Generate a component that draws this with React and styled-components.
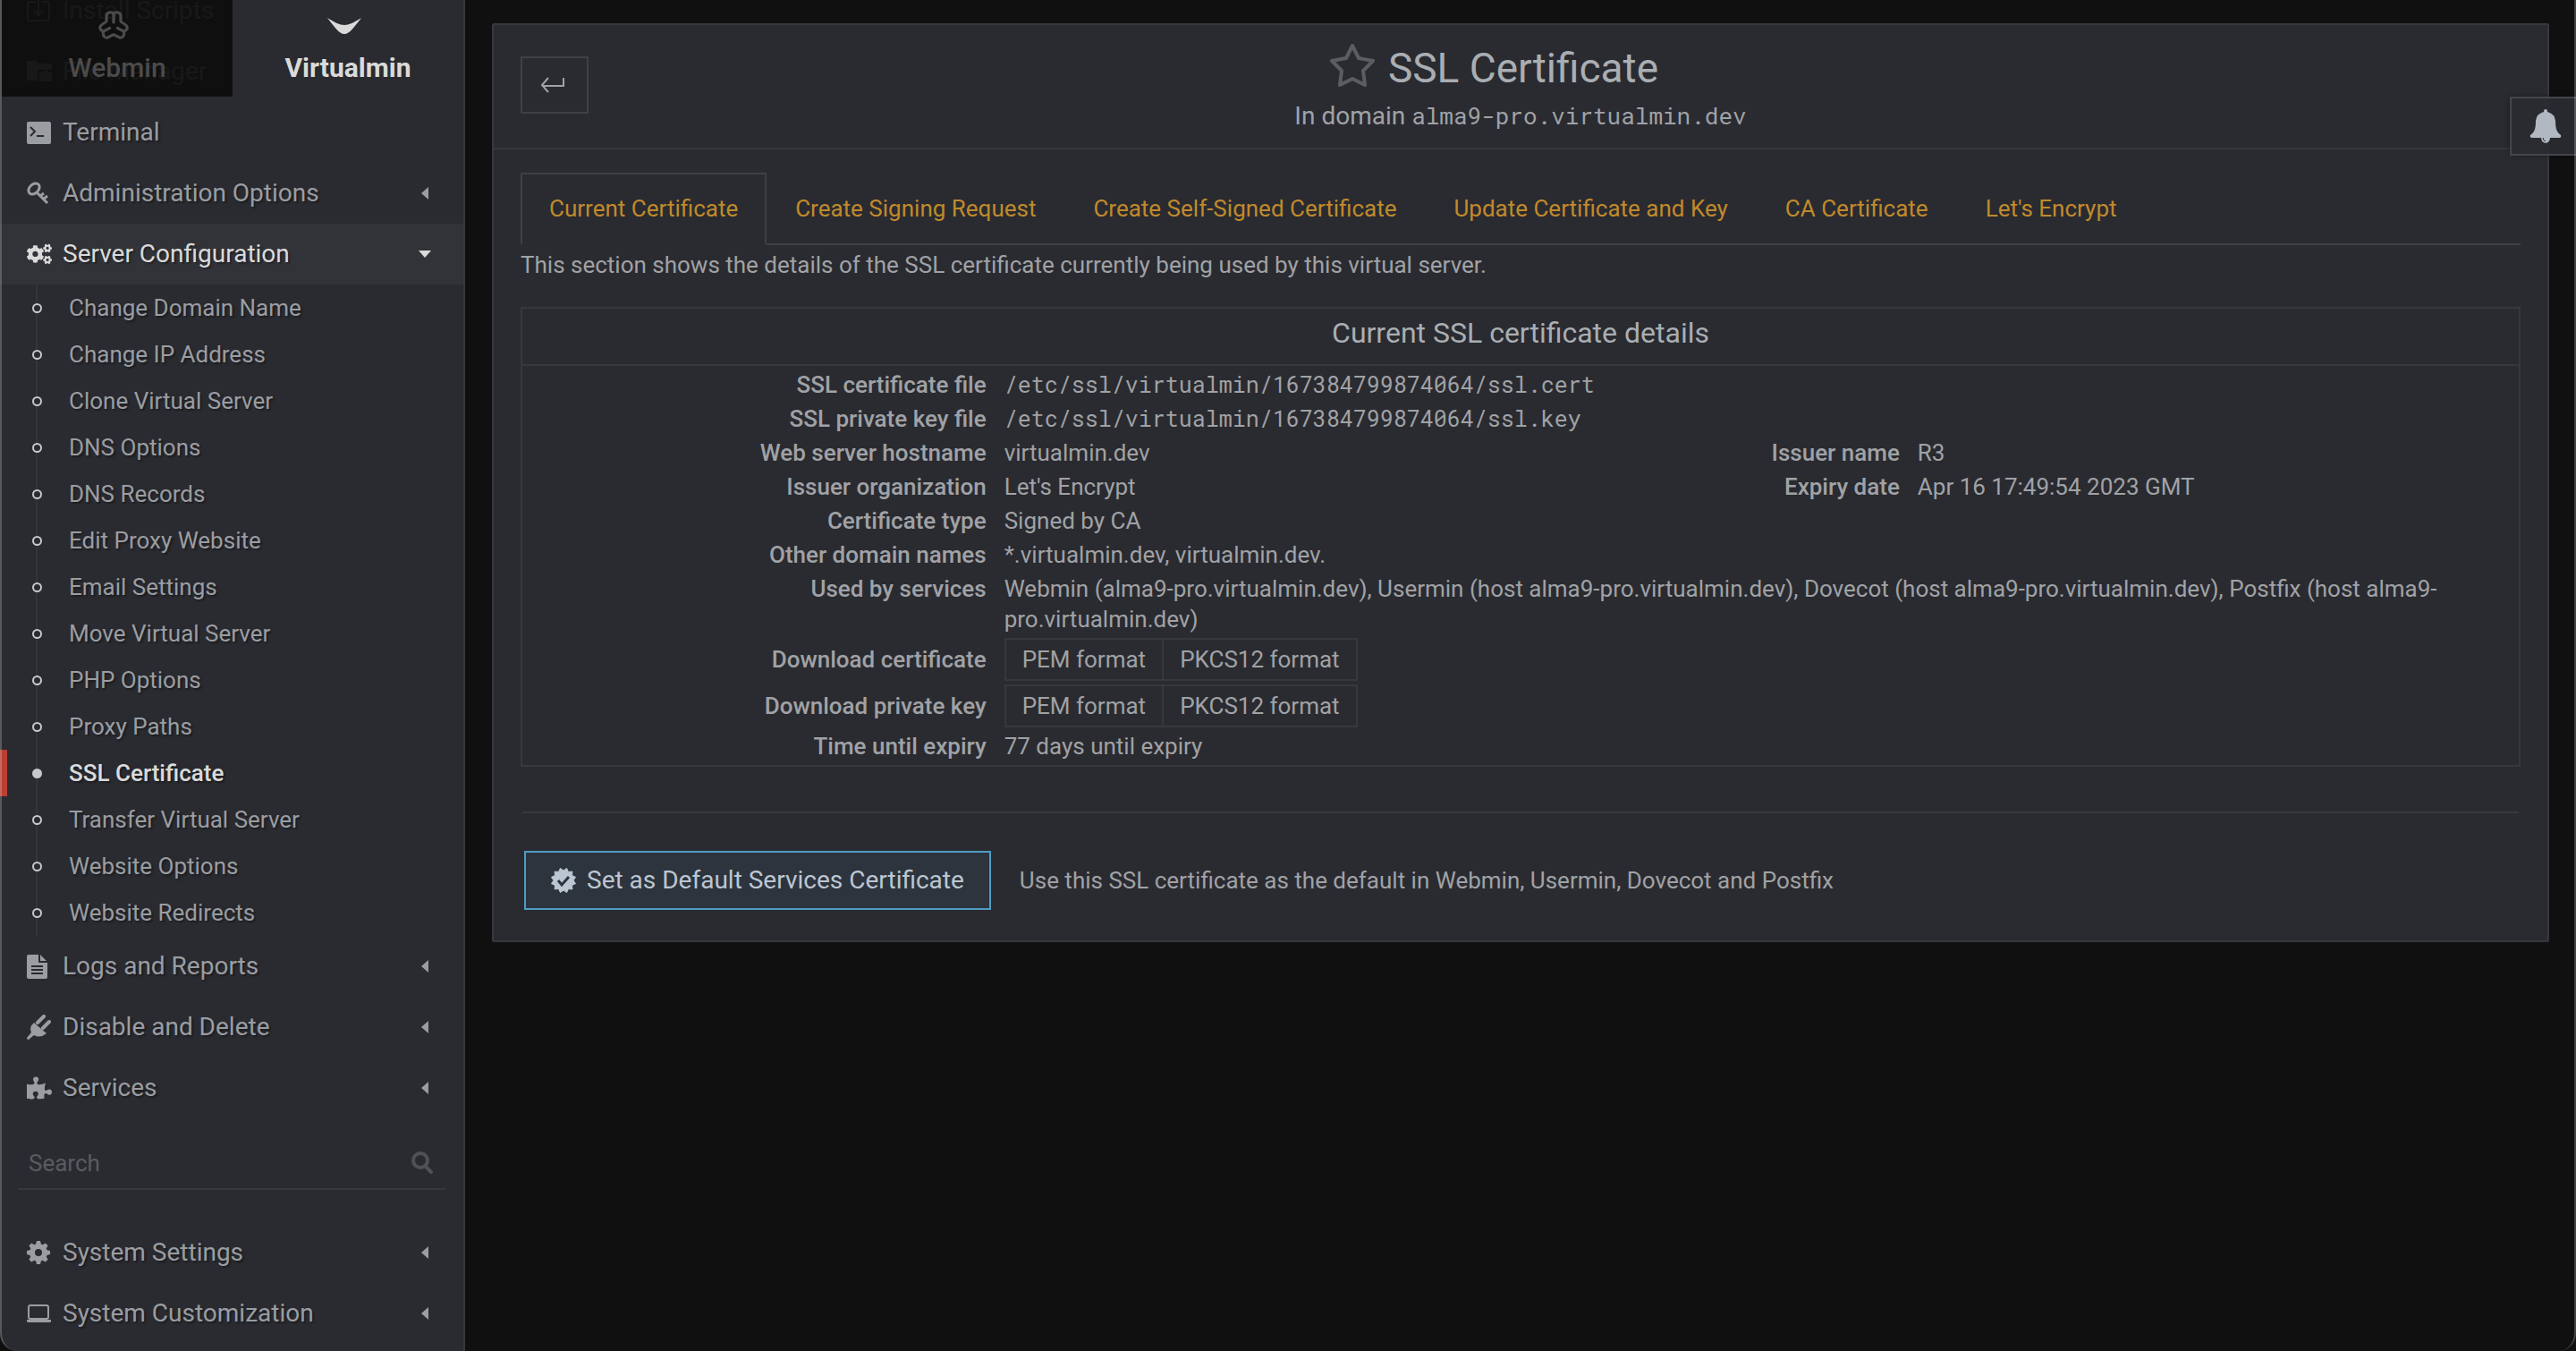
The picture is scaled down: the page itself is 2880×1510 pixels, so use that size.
import React from "react";
import styled, { createGlobalStyle, css } from "styled-components";
import { FaCogs, FaPuzzlePiece } from "react-icons/fa";

const color = {
  page: "#101010",
  panel: "#2a2b30",
  raised: "#323338",
  line: "#37383d",
  lineStrong: "#3f4046",
  text: "#a0a2a6",
  menu: "#9a9da2",
  heading: "#a9aeb3",
  bright: "#dadada",
  link: "#c08a2c",
  danger: "#b93f33",
  info: "#4f9cc4",
};

const mono = '"Roboto Mono", "DejaVu Sans Mono", monospace';

const GlobalStyle = createGlobalStyle`
  *, *::before, *::after { box-sizing: border-box; }
  body {
    margin: 0;
    background: ${color.page};
    color: ${color.text};
    font: 400 26px/34px Roboto, "Liberation Sans", sans-serif;
  }
  button, input { font: inherit; color: inherit; margin: 0; }
  button { cursor: pointer; }
  a { color: inherit; text-decoration: none; }
  h1, h2, p, ul { margin: 0; padding: 0; font-weight: 400; }
  ul { list-style: none; }
`;

const Page = styled.div`
  display: flex;
  min-height: 100vh;
`;

const WindowEdge = styled.div`
  position: fixed;
  inset: 0;
  border: 2px solid rgba(255, 255, 255, 0.22);
  border-top: 0;
  border-bottom: 0;
  border-radius: 0 0 20px 20px;
  pointer-events: none;
`;

/* ---------- sidebar ---------- */

const Sidebar = styled.aside`
  position: relative;
  flex: none;
  width: 520px;
  max-height: 100vh;
  overflow: hidden;
  background: ${color.panel};
  border-right: 2px solid ${color.line};
  border-bottom-left-radius: 20px;
`;

const ProductTabs = styled.div`
  position: absolute;
  top: 0;
  left: 2px;
  right: 0;
  display: grid;
  grid-template-columns: 1fr 1fr;
`;

const ProductTab = styled.button`
  display: flex;
  flex-direction: column;
  align-items: center;
  justify-content: space-between;
  height: 108px;
  padding: 12px 0 15px;
  border: 0;
  font-size: 30px;
  font-weight: ${(p) => (p.$active ? 700 : 500)};
  color: ${(p) => (p.$active ? color.bright : "#4b4b4b")};
  background: ${(p) => (p.$active ? color.panel : "rgba(13, 13, 13, 0.92)")};
  svg { margin-right: 8px; }
`;

const Menu = styled.ul`
  text-shadow: 2px 2px 2px rgba(0, 0, 0, 0.35);
`;

const ScrolledMenu = styled(Menu)`
  margin-top: -22px;
`;

const menuRow = css`
  display: flex;
  align-items: center;
  gap: 10px;
  width: 100%;
  height: 68px;
  padding: 0 36px 0 30px;
  border: 0;
  font-size: 28px;
  text-align: left;
  text-shadow: inherit;
  color: ${(p) => (p.$open ? color.bright : color.menu)};
  background: ${(p) => (p.$open ? color.raised : "transparent")};
`;

const MenuLink = styled.a`
  ${menuRow}
`;

const MenuButton = styled.button`
  ${menuRow}
`;

const MenuIcon = styled.span`
  display: flex;
  flex: none;
  width: 30px;
  svg { display: block; flex: none; }
`;

const MenuLabel = styled.span`
  flex: 1;
`;

const Caret = styled.span`
  width: 0;
  height: 0;
  border: solid transparent;
  ${(p) =>
    p.$open
      ? css`
          border-width: 8px 7px 0;
          border-top-color: currentColor;
        `
      : css`
          border-width: 7px 8px 7px 0;
          border-right-color: currentColor;
          margin-right: 3px;
        `}
`;

const SubMenu = styled.ul`
  background: linear-gradient(#33353a, #33353a) 40px 0 / 2px 100% no-repeat;
`;

const SubLink = styled.a`
  display: flex;
  align-items: center;
  gap: 30px;
  height: 52px;
  padding-left: ${(p) => (p.$current ? 28 : 36)}px;
  border-left: ${(p) => (p.$current ? `8px solid ${color.danger}` : "0")};
  font-weight: ${(p) => (p.$current ? 500 : 400)};
  color: ${(p) => (p.$current ? color.bright : color.menu)};

  &::before {
    content: "";
    width: 11px;
    height: 11px;
    border: 2px solid #c6c7c9;
    border-radius: 50%;
    background: ${(p) => (p.$current ? "#c6c7c9" : color.panel)};
  }
`;

const SearchBox = styled.label`
  display: flex;
  align-items: center;
  height: 58px;
  margin: 22px 20px 36px;
  padding: 0 14px 0 12px;
  border-bottom: 2px solid ${color.line};
  color: #505154;
`;

const SearchInput = styled.input`
  flex: 1;
  min-width: 0;
  padding: 0;
  border: 0;
  outline: 0;
  background: transparent;
  &::placeholder { color: #5a5b60; opacity: 1; }
`;

/* ---------- main panel ---------- */

const Main = styled.main`
  flex: 1;
  min-width: 0;
  padding: 26px 30px;
`;

const Panel = styled.section`
  background: ${color.panel};
  border: 2px solid ${color.line};
  border-radius: 2px;
`;

const PanelHeader = styled.header`
  display: grid;
  grid-template-columns: 1fr auto 1fr;
  align-items: start;
  padding: 20px 30px 16px;
  border-bottom: 2px solid ${color.line};
`;

const BackButton = styled.button`
  display: flex;
  align-items: center;
  justify-content: center;
  width: 76px;
  height: 64px;
  margin-top: 15px;
  padding: 0 4px 0 0;
  border: 2px solid ${color.lineStrong};
  background: transparent;
`;

const Heading = styled.div`
  display: flex;
  flex-direction: column;
  align-items: center;
  gap: 7px;
`;

const TitleRow = styled.div`
  display: flex;
  align-items: flex-start;
  gap: 14px;
  padding-right: 60px;
`;

const StarButton = styled.button`
  display: flex;
  padding: 0;
  border: 0;
  background: transparent;
  color: #5c5d61;
`;

const Title = styled.h1`
  font-size: 46px;
  line-height: 56px;
  color: ${color.heading};
`;

const Subtitle = styled.p`
  font-size: 28px;
  line-height: 38px;
`;

const Code = styled.code`
  font-family: ${mono};
  font-size: ${(p) => (p.$large ? 26 : 25)}px;
  line-height: 1;
`;

const PanelBody = styled.div`
  padding: 26px 30px 34px;
`;

const Tabs = styled.nav`
  display: flex;
  border-bottom: 2px solid ${color.lineStrong};
`;

const Tab = styled.a`
  margin-bottom: -2px;
  padding: 21px 30px 22px;
  border: 2px solid transparent;
  color: ${color.link};
  ${(p) =>
    p.$active &&
    css`
      border-color: ${color.lineStrong};
      border-bottom-color: ${color.panel};
    `}
`;

const Description = styled.p`
  padding: 5px 0 30px;
`;

const Details = styled.div`
  border: 2px solid ${color.line};
`;

const DetailsTitle = styled.h2`
  padding: 8px 0 16px;
  border-bottom: 2px solid ${color.line};
  font-size: 32px;
  line-height: 38px;
  text-align: center;
  color: ${color.heading};
`;

const Table = styled.table`
  width: 100%;
  margin: 2px 0;
  border-collapse: collapse;
  table-layout: fixed;
`;

const Col = styled.col`
  width: ${(p) => p.$width};
`;

const LabelCell = styled.th`
  padding: 2px 17px 2px 0;
  font-weight: 500;
  text-align: right;
  vertical-align: ${(p) => (p.$middle ? "middle" : "top")};
  white-space: nowrap;
`;

const ValueCell = styled.td`
  padding: 2px 3px;
  vertical-align: top;
`;

const ButtonGroup = styled.div`
  display: flex;
`;

const FormatButton = styled.button`
  height: 48px;
  padding: 0 18px;
  border: 2px solid ${color.line};
  background: transparent;
  & + & { margin-left: -2px; }
`;

const Divider = styled.hr`
  height: 2px;
  margin: 50px 2px 42px;
  border: 0;
  background: ${color.line};
`;

const ActionRow = styled.div`
  display: flex;
  align-items: center;
  gap: 32px;
  padding-left: 4px;
`;

const PrimaryButton = styled.button`
  display: flex;
  align-items: center;
  gap: 12px;
  height: 66px;
  padding: 0 28px;
  border: 2px solid ${color.info};
  background: #2d343e;
  color: #bcc6d2;
  font-size: 28px;
`;

const NotificationButton = styled.button`
  position: fixed;
  top: 108px;
  right: 0;
  display: flex;
  align-items: center;
  width: 74px;
  height: 66px;
  padding: 0 0 0 20px;
  border: 2px solid #45464c;
  border-right: 0;
  background: rgba(42, 43, 48, 0.93);
  box-shadow: 0 0 6px rgba(0, 0, 0, 0.4);
  color: #b2b8c2;
`;

/* ---------- icons ---------- */

const WebminLogo = () => (
  <svg width="34" height="32" viewBox="0 0 94 94" preserveAspectRatio="none" fill="none" stroke="currentColor" strokeWidth="9" strokeLinecap="round" strokeLinejoin="round" aria-hidden="true">
    <path d="M47 10 C40 3 25 3 25 17 L25 34 C25 40 5 44 5 55 C5 64 13 66 15 68 C13 84 20 90 29 88 L47 78 L65 88 C74 90 81 84 79 68 C81 66 89 64 89 55 C89 44 69 40 69 34 L69 17 C69 3 54 3 47 10 Z" />
    <path d="M47 10 V38 M15 68 L35 57 M79 68 L59 57" />
  </svg>
);

const VirtualminLogo = () => (
  <svg width="38" height="34" viewBox="0 0 38 34" fill="currentColor" aria-hidden="true">
    <path d="M0 8 C8 18 13 26 19 26 C25 26 30 18 38 8 C30 13 24 16 19 16 C14 16 8 13 0 8 Z" />
  </svg>
);

const InstallIcon = () => (
  <svg width="28" height="28" viewBox="0 0 28 28" fill="none" stroke="currentColor" strokeWidth="2" aria-hidden="true">
    <path d="M10 4 H3 Q1 4 1 6 V23 Q1 25 3 25 H23 Q25 25 25 23 V6 Q25 4 23 4 H17 M13 2 V18 M8 14 L13 19 L18 14" />
  </svg>
);

const FolderIcon = () => (
  <svg width="28" height="24" viewBox="0 0 28 24" fill="currentColor" aria-hidden="true">
    <path d="M2 0 H10 L13 3 H26 Q28 3 28 5 V10 H12 V22 H2 Q0 22 0 20 V2 Q0 0 2 0 Z M14 13 H17 V11 H24 V13 H28 V23 H14 Z" />
  </svg>
);

const TerminalIcon = () => (
  <svg width="28" height="26" viewBox="0 0 28 26" aria-hidden="true">
    <rect x="0" y="1" width="27" height="25" rx="2" fill="currentColor" />
    <path d="M4 7 L9 12 L4 17 M11 17 H19" fill="none" stroke={color.panel} strokeWidth="2" />
  </svg>
);

const KeyIcon = () => (
  <svg width="26" height="26" viewBox="0 0 26 26" fill="none" stroke="currentColor" aria-hidden="true">
    <ellipse cx="8" cy="8" rx="7" ry="5" strokeWidth="3" transform="rotate(-45 8 8)" />
    <path d="M11 12 L23 24 M18 20 L23 16 M15 16 L19 13" strokeWidth="3" />
  </svg>
);

const DocumentIcon = () => (
  <svg width="23" height="27" viewBox="0 0 23 27" aria-hidden="true">
    <path d="M2 0 H13 V8 Q13 9 14 9 H23 V25 Q23 27 21 27 H2 Q0 27 0 25 V2 Q0 0 2 0 Z M15 0 L22 7 H15 Z" fill="currentColor" />
    <path d="M5 13 H18 M5 17 H18 M5 21 H18" fill="none" stroke={color.panel} strokeWidth="2" />
  </svg>
);

const PlugIcon = () => (
  <svg width="27" height="28" viewBox="0 0 27 28" fill="currentColor" aria-hidden="true">
    <path d="M8 9 L22 21 Q15 27 8 23 L2 28 Q0 28 0 26 L5 20 Q2 14 8 9 Z" />
    <path d="M12 9 L19 2 M18 15 L25 8" fill="none" stroke="currentColor" strokeWidth="4" strokeLinecap="round" />
  </svg>
);

const GearIcon = () => (
  <svg width="26" height="26" viewBox="0 0 26 26" aria-hidden="true">
    <circle cx="13" cy="13" r="7" fill="none" stroke="currentColor" strokeWidth="6" />
    {[0, 45, 90, 135].map((a) => (
      <path key={a} d="M10 4 L11 0 H15 L16 4 Z M10 22 L11 26 H15 L16 22 Z" fill="currentColor" transform={`rotate(${a} 13 13)`} />
    ))}
  </svg>
);

const LaptopIcon = () => (
  <svg width="28" height="22" viewBox="0 0 28 22" aria-hidden="true">
    <rect x="2" y="2" width="22" height="15" rx="2" fill="none" stroke="currentColor" strokeWidth="2" />
    <path d="M0 18 H27 V20 Q27 21 25 21 H2 Q0 21 0 20 Z" fill="currentColor" />
  </svg>
);

const SearchIcon = () => (
  <svg width="24" height="26" viewBox="0 0 24 26" fill="none" stroke="currentColor" strokeLinecap="round" aria-hidden="true">
    <circle cx="10" cy="10" r="8" strokeWidth="4" />
    <path d="M16 17 L22 23" strokeWidth="4" />
  </svg>
);

const BackIcon = () => (
  <svg width="28" height="18" viewBox="0 0 28 18" fill="none" stroke="currentColor" strokeWidth="2" aria-hidden="true">
    <path d="M26 1 V10 H2 M9 1 L2 9 L9 17" />
  </svg>
);

const StarIcon = () => (
  <svg width="52" height="50" viewBox="0 0 52 50" fill="none" stroke="currentColor" strokeWidth="4" strokeLinejoin="round" aria-hidden="true">
    <path d="M26 3 L33 17 L49 20 L38 31 L40 47 L26 40 L12 47 L14 31 L3 20 L19 17 Z" />
  </svg>
);

const BellIcon = () => (
  <svg width="36" height="38" viewBox="0 0 36 38" fill="currentColor" aria-hidden="true">
    <path d="M18 0 Q20 0 20 3 Q28 5 29 13 C29 23 31 26 35 29 Q36 32 33 32 H23 Q23 37 18 38 Q13 37 13 32 H3 Q0 32 1 29 C5 26 7 23 7 13 Q8 5 16 3 Q16 0 18 0 Z" />
    <path d="M15 32 Q15 35 18 36" fill="none" stroke={color.panel} strokeWidth="1" />
  </svg>
);

const sealPoints = Array.from({ length: 24 }, (_, i) => {
  const r = i % 2 ? 11 : 14;
  const a = (i * Math.PI) / 12 + Math.PI / 12;
  return `${14 + r * Math.cos(a)},${14 + r * Math.sin(a)}`;
}).join(" ");

const SealIcon = () => (
  <svg width="28" height="28" viewBox="0 0 28 28" aria-hidden="true">
    <polygon points={sealPoints} fill="currentColor" stroke="currentColor" strokeLinejoin="round" />
    <path d="M8 14 L12 19 L20 10" fill="none" stroke="#2d343e" strokeWidth="3" />
  </svg>
);

/* ---------- data ---------- */

const serverPages = [
  "Change Domain Name", "Change IP Address", "Clone Virtual Server", "DNS Options", "DNS Records",
  "Edit Proxy Website", "Email Settings", "Move Virtual Server", "PHP Options", "Proxy Paths",
  "SSL Certificate", "Transfer Virtual Server", "Website Options", "Website Redirects",
];

const tabs = [
  "Current Certificate", "Create Signing Request", "Create Self-Signed Certificate",
  "Update Certificate and Key", "CA Certificate", "Let's Encrypt",
];

const Group = ({ icon, label, open, children }) => (
  <li>
    <MenuButton type="button" $open={open} aria-expanded={!!open}>
      <MenuIcon>{icon}</MenuIcon>
      <MenuLabel>{label}</MenuLabel>
      <Caret $open={open} />
    </MenuButton>
    {children}
  </li>
);

const Entry = ({ icon, label }) => (
  <li>
    <MenuLink href="#">
      <MenuIcon>{icon}</MenuIcon>
      <MenuLabel>{label}</MenuLabel>
    </MenuLink>
  </li>
);

const Row = ({ label, children }) => (
  <tr>
    <LabelCell scope="row">{label}</LabelCell>
    <ValueCell colSpan={3}>{children}</ValueCell>
  </tr>
);

const PairRow = ({ items }) => (
  <tr>
    {items.map(([label, value]) => (
      <React.Fragment key={label}>
        <LabelCell scope="row">{label}</LabelCell>
        <ValueCell>{value}</ValueCell>
      </React.Fragment>
    ))}
  </tr>
);

const DownloadRow = ({ label }) => (
  <tr>
    <LabelCell scope="row" $middle>{label}</LabelCell>
    <ValueCell colSpan={3}>
      <ButtonGroup>
        <FormatButton type="button">PEM format</FormatButton>
        <FormatButton type="button">PKCS12 format</FormatButton>
      </ButtonGroup>
    </ValueCell>
  </tr>
);

export default function App() {
  return (
    <Page>
      <GlobalStyle />
      <Sidebar>
        <ScrolledMenu>
          <Entry icon={<InstallIcon />} label="Install Scripts" />
          <Entry icon={<FolderIcon />} label="File Manager" />
          <Entry icon={<TerminalIcon />} label="Terminal" />
          <Group icon={<KeyIcon />} label="Administration Options" />
          <Group icon={<FaCogs size={28} />} label="Server Configuration" open>
            <SubMenu>
              {serverPages.map((name) => (
                <li key={name}>
                  <SubLink href="#" $current={name === "SSL Certificate"}>{name}</SubLink>
                </li>
              ))}
            </SubMenu>
          </Group>
          <Group icon={<DocumentIcon />} label="Logs and Reports" />
          <Group icon={<PlugIcon />} label="Disable and Delete" />
          <Group icon={<FaPuzzlePiece size={28} />} label="Services" />
        </ScrolledMenu>
        <SearchBox>
          <SearchInput type="text" placeholder="Search" aria-label="Search" />
          <SearchIcon />
        </SearchBox>
        <Menu>
          <Group icon={<GearIcon />} label="System Settings" />
          <Group icon={<LaptopIcon />} label="System Customization" />
        </Menu>
        <ProductTabs>
          <ProductTab type="button"><WebminLogo />Webmin</ProductTab>
          <ProductTab type="button" $active><VirtualminLogo />Virtualmin</ProductTab>
        </ProductTabs>
      </Sidebar>

      <Main>
        <Panel>
          <PanelHeader>
            <BackButton type="button" aria-label="Back"><BackIcon /></BackButton>
            <Heading>
              <TitleRow>
                <StarButton type="button" aria-label="Add to favorites"><StarIcon /></StarButton>
                <Title>SSL Certificate</Title>
              </TitleRow>
              <Subtitle>In domain <Code $large>alma9-pro.virtualmin.dev</Code></Subtitle>
            </Heading>
          </PanelHeader>
          <PanelBody>
            <Tabs>
              {tabs.map((name, i) => (
                <Tab key={name} href="#" $active={i === 0}>{name}</Tab>
              ))}
            </Tabs>
            <Description>
              This section shows the details of the SSL certificate currently being used by this virtual server.
            </Description>
            <Details>
              <DetailsTitle>Current SSL certificate details</DetailsTitle>
              <Table>
                <colgroup>
                  <Col $width="24%" />
                  <Col $width="auto" />
                  <Col $width="8%" />
                  <Col $width="30.25%" />
                </colgroup>
                <tbody>
                  <Row label="SSL certificate file"><Code>/etc/ssl/virtualmin/167384799874064/ssl.cert</Code></Row>
                  <Row label="SSL private key file"><Code>/etc/ssl/virtualmin/167384799874064/ssl.key</Code></Row>
                  <PairRow items={[["Web server hostname", "virtualmin.dev"], ["Issuer name", "R3"]]} />
                  <PairRow items={[["Issuer organization", "Let's Encrypt"], ["Expiry date", "Apr 16 17:49:54 2023 GMT"]]} />
                  <Row label="Certificate type">Signed by CA</Row>
                  <Row label="Other domain names">*.virtualmin.dev, virtualmin.dev.</Row>
                  <Row label="Used by services">
                    Webmin (alma9-pro.virtualmin.dev), Usermin (host alma9-pro.virtualmin.dev), Dovecot (host
                    alma9-pro.virtualmin.dev), Postfix (host alma9-pro.virtualmin.dev)
                  </Row>
                  <DownloadRow label="Download certificate" />
                  <DownloadRow label="Download private key" />
                  <Row label="Time until expiry">77 days until expiry</Row>
                </tbody>
              </Table>
            </Details>
            <Divider />
            <ActionRow>
              <PrimaryButton type="button"><SealIcon />Set as Default Services Certificate</PrimaryButton>
              <p>Use this SSL certificate as the default in Webmin, Usermin, Dovecot and Postfix</p>
            </ActionRow>
          </PanelBody>
        </Panel>
      </Main>

      <NotificationButton type="button" aria-label="Notifications"><BellIcon /></NotificationButton>
      <WindowEdge />
    </Page>
  );
}
